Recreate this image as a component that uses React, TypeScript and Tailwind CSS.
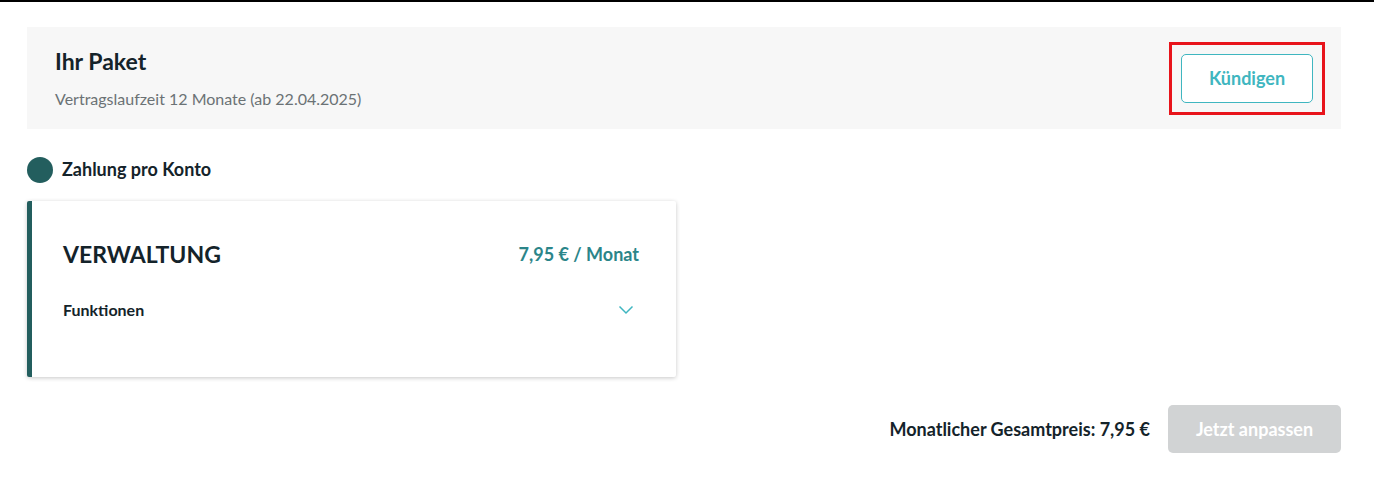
import React from "react";

function ChevronDown() {
  return (
    <svg width="16" height="10" viewBox="0 0 16 10" fill="none" className="text-[#3fb6c0]">
      <path d="M1.5 1.5L8 8l6.5-6.5" stroke="currentColor" strokeWidth="1.5" />
    </svg>
  );
}

export default function App() {
  return (
    <div className="min-h-[483px] bg-white font-['Lato',sans-serif] text-[#14232a]">
      <div className="h-[2px] bg-black" />
      <div className="pl-[27px] pr-[33px] pt-[25px]">
        <section className="flex h-[102px] items-center justify-between bg-[#f7f7f7] px-[28px]">
          <div>
            <h1 className="text-[23px] font-bold leading-none">Ihr Paket</h1>
            <p className="mt-[18px] text-[16px] leading-none text-[#6b7275]">
              Vertragslaufzeit 12 Monate (ab 22.04.2025)
            </p>
          </div>
          <div className="relative">
            <button className="h-[49px] w-[132px] rounded-[5px] border border-[#3fb6c0] bg-white text-[18px] font-bold text-[#3fb6c0]">
              Kündigen
            </button>
            <div className="pointer-events-none absolute -inset-x-[12px] -inset-y-[12px] border-[3px] border-[#e8141b]" />
          </div>
        </section>

        <div className="mt-[27px] flex items-center gap-[9px]">
          <span className="h-[26px] w-[26px] rounded-full bg-[#235e5e]" />
          <span className="text-[18px] font-bold">Zahlung pro Konto</span>
        </div>

        <article className="mt-[18px] h-[176px] w-[649px] rounded-[2px] border-l-[5px] border-[#235e5e] bg-white pl-[31px] pr-[37px] pt-[40px] shadow-[0_1px_4px_rgba(0,0,0,0.22)]">
          <div className="flex items-center justify-between">
            <h2 className="text-[23px] font-bold leading-none">VERWALTUNG</h2>
            <span className="text-[18px] font-bold text-[#2b8589]">7,95 € / Monat</span>
          </div>
          <div className="mt-[30px] flex items-center justify-between pr-[5px]">
            <span className="text-[16px] font-bold">Funktionen</span>
            <ChevronDown />
          </div>
        </article>

        <div className="mt-[28px] flex items-center justify-end gap-[18px]">
          <span className="text-[18px] font-bold">Monatlicher Gesamtpreis: 7,95 €</span>
          <button className="h-[48px] w-[173px] rounded-[5px] bg-[#d1d3d4] text-[18px] font-bold text-white">
            Jetzt anpassen
          </button>
        </div>
      </div>
    </div>
  );
}
